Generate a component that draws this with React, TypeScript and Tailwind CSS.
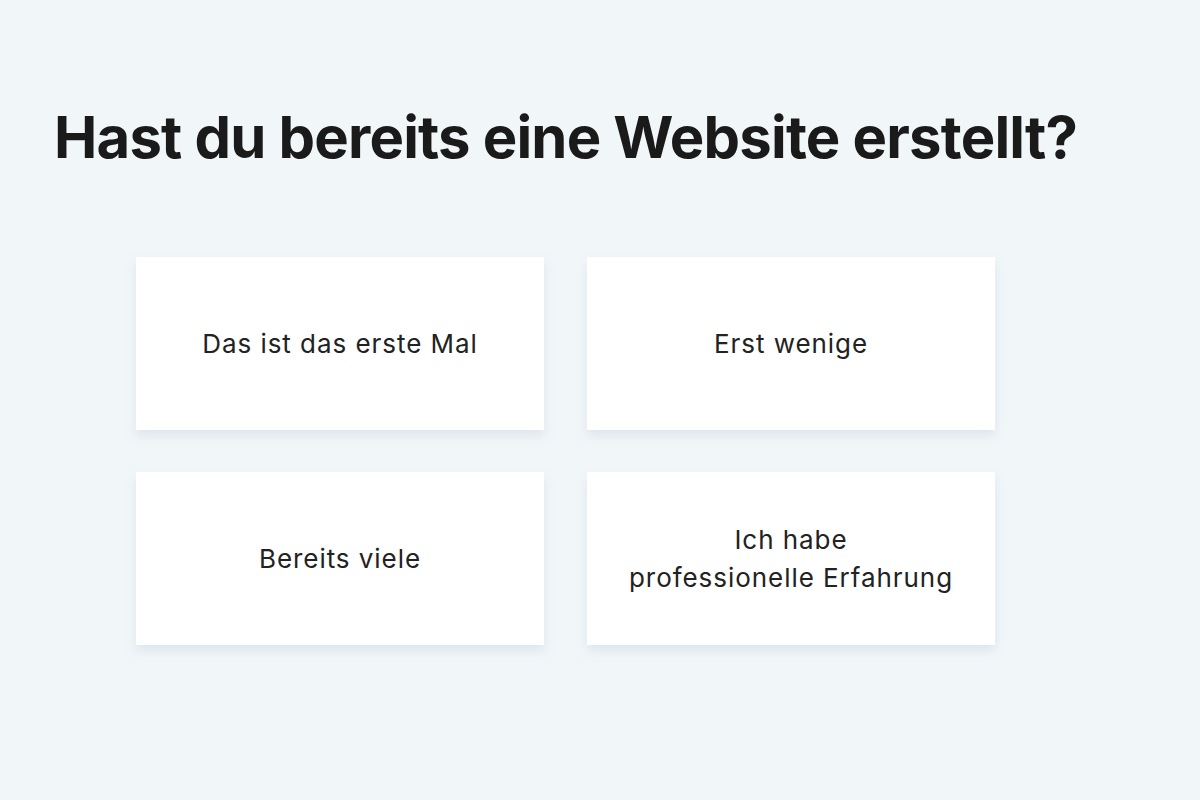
export default function App() {
  const options = [
    "Das ist das erste Mal",
    "Erst wenige",
    "Bereits viele",
    "Ich habe\nprofessionelle Erfahrung",
  ];
  return (
    <div
      className="w-[1200px] h-[800px] bg-[#f1f6f9] text-[#1c1c1c] overflow-hidden"
      style={{ fontFamily: "Inter, 'Noto Sans', sans-serif" }}
    >
      <h1 className="pl-[54px] pt-[102px] text-[58px] leading-[70px] font-bold tracking-[-0.8px] text-[#1a1a1a]">
        Hast du bereits eine Website erstellt?
      </h1>
      <div className="ml-[136px] mt-[85px] grid grid-cols-[408px_408px] gap-x-[43px] gap-y-[42px]">
        {options.map((o) => (
          <div
            key={o}
            className="h-[173px] bg-white flex items-center justify-center text-center text-[26px] leading-[38px] tracking-[0.95px] whitespace-pre-line text-[#222] shadow-[0_6px_10px_rgba(170,185,200,0.25)]"
          >
            {o}
          </div>
        ))}
      </div>
    </div>
  );
}
